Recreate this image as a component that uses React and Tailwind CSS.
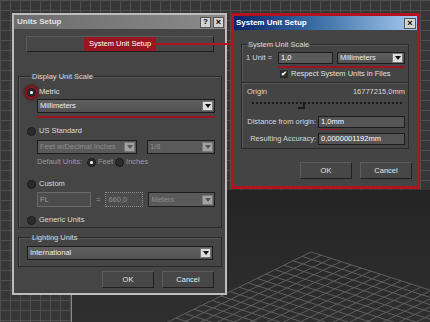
const lines = [];
const apex = [239, 62];
const a = [10, 3.2];
const b = [-9, 4.4];
const n = 26;
for (let i = 0; i <= n; i++) {
  lines.push([apex[0] + i * a[0], apex[1] + i * a[1], apex[0] + i * a[0] + n * b[0], apex[1] + i * a[1] + n * b[1]]);
  lines.push([apex[0] + i * b[0], apex[1] + i * b[1], apex[0] + i * b[0] + n * a[0], apex[1] + i * b[1] + n * a[1]]);
}

function Radio({ on, glow }) {
  return (
    <span
      className={`flex h-[9px] w-[9px] shrink-0 items-center justify-center rounded-full border border-[#1a1a1a] bg-[#2c2c2c] ${
        glow ? 'shadow-[0_0_0_2px_#8e1420,0_0_3px_3px_#5a1016]' : ''
      }`}
    >
      {on && <span className="h-[3px] w-[3px] rounded-full bg-white" />}
    </span>
  );
}

function Arrow({ off }) {
  return (
    <span
      className={`flex h-[10px] w-[11px] shrink-0 items-center justify-center border border-[#777] ${
        off ? 'bg-[#a3a3a3]' : 'bg-[#dcdcdc]'
      }`}
    >
      <span
        className={`h-0 w-0 border-l-[3px] border-r-[3px] border-t-[4px] border-l-transparent border-r-transparent ${
          off ? 'border-t-[#555]' : 'border-t-[#111]'
        }`}
      />
    </span>
  );
}

function Drop({ text, off, className = '' }) {
  return (
    <div
      className={`flex items-center justify-between border border-[#1c1c1c] pl-[2px] pr-[1px] ${
        off ? 'bg-[#5a5a5a] text-[#8c8c8c]' : 'bg-[linear-gradient(#5f5f5f,#525252)] text-[#ececec]'
      } ${className}`}
    >
      <span className="leading-none">{text}</span>
      <Arrow off={off} />
    </div>
  );
}

function Btn({ children, className = '' }) {
  return (
    <div
      className={`flex items-center justify-center border border-t-[#5c5c5c] border-l-[#5c5c5c] border-b-[#1f1f1f] border-r-[#1f1f1f] bg-[#474747] text-[#e4e4e4] ${className}`}
    >
      {children}
    </div>
  );
}

function UnitsSetup() {
  return (
    <div className="absolute left-[12px] top-[13px] flex h-[282px] w-[215px] flex-col border-2 border-[#bdbdbd] bg-[#454545]">
      <div className="flex h-[14px] items-center justify-between bg-[linear-gradient(to_right,#6c6c6c,#8a8a8a)] pl-[3px] pr-[1px]">
        <span className="text-[8px] font-bold text-[#e2e2e2]">Units Setup</span>
        <div className="flex gap-[2px]">
          <span className="flex h-[11px] w-[11px] items-center justify-center border border-[#555] bg-[#d4d4d4] text-[8px] font-bold leading-none text-black">?</span>
          <span className="flex h-[11px] w-[11px] items-center justify-center border border-[#555] bg-[#d4d4d4] text-[9px] font-bold leading-none text-black">×</span>
        </div>
      </div>

      <Btn className="ml-[12px] mr-[11px] mt-[7px] h-[16px]">
        <span className="bg-[#9a1524] px-[5px] py-[3px] leading-none text-white">System Unit Setup</span>
      </Btn>

      <fieldset className="ml-[4px] mr-[3px] mt-[20px] flex flex-col border border-[#2a2a2a] pb-[2px] pl-[8px] pr-[6px] shadow-[inset_1px_1px_0_#585858]">
        <legend className="ml-[4px] px-[1px] leading-[9px] text-[#d6d6d6]">Display Unit Scale</legend>
        <div className="mt-[6px] flex h-[10px] items-center gap-[3px]">
          <Radio on glow />
          <span className="text-[#e0e0e0]">Metric</span>
        </div>
        <Drop text="Millimeters" className="ml-[10px] mt-[2px] h-[14px]" />
        <div className="ml-[10px] mt-[3px] h-[2px] bg-[#a0121f]" />
        <div className="mt-[8px] flex h-[10px] items-center gap-[3px]">
          <Radio />
          <span className="text-[#dadada]">US Standard</span>
        </div>
        <div className="ml-[10px] mt-[4px] flex gap-[10px]">
          <Drop off text="Feet w/Decimal Inches" className="h-[14px] w-[100px]" />
          <Drop off text="1/8" className="h-[14px] flex-1" />
        </div>
        <div className="ml-[10px] mt-[3px] flex h-[10px] items-center text-[#9a9a9a]">
          <span>Default Units:</span>
          <span className="ml-[5px]"><Radio on /></span>
          <span className="ml-[2px]">Feet</span>
          <span className="ml-[2px]"><Radio /></span>
          <span className="ml-[2px]">Inches</span>
        </div>
        <div className="mt-[12px] flex h-[10px] items-center gap-[3px]">
          <Radio />
          <span className="text-[#dadada]">Custom</span>
        </div>
        <div className="ml-[10px] mt-[3px] flex h-[15px] items-center">
          <div className="flex h-full w-[54px] items-center border border-[#6a6a6a] bg-[#4c4c4c] pl-[2px] text-[#a0a0a0]">FL</div>
          <span className="mx-[5px] text-[#9a9a9a]">=</span>
          <div className="flex h-full w-[38px] items-center border border-dotted border-[#8a8a8a] bg-[#4c4c4c] pl-[2px] text-[#8c8c8c]">660,0</div>
          <Drop off text="Meters" className="ml-[5px] h-full flex-1" />
        </div>
        <div className="mt-[8px] flex h-[10px] items-center gap-[3px]">
          <Radio />
          <span className="text-[#dadada]">Generic Units</span>
        </div>
      </fieldset>

      <fieldset className="ml-[4px] mr-[3px] mt-[5px] flex flex-col border border-[#2a2a2a] pb-[6px] pl-[8px] pr-[8px] shadow-[inset_1px_1px_0_#585858]">
        <legend className="ml-[4px] px-[1px] leading-[9px] text-[#d6d6d6]">Lighting Units</legend>
        <Drop text="International" className="mt-[4px] h-[14px] bg-[linear-gradient(#4a4a4a,#3e3e3e)]" />
      </fieldset>

      <div className="mr-[11px] mt-[4px] flex justify-end gap-[8px]">
        <Btn className="h-[17px] w-[52px]">OK</Btn>
        <Btn className="h-[17px] w-[52px]">Cancel</Btn>
      </div>
    </div>
  );
}

function SystemUnitSetup() {
  return (
    <div className="absolute left-[231px] top-[13px] flex h-[176px] w-[189px] flex-col border-[3px] border-[#b3121f] bg-[#444444]">
      <div className="flex h-[14px] items-center justify-between bg-[linear-gradient(to_right,#0a246a,#3a6ea5_45%,#a6caf0)] pl-[2px] pr-[1px]">
        <span className="text-[8px] font-bold text-white">System Unit Setup</span>
        <span className="flex h-[11px] w-[12px] items-center justify-center border border-[#555] bg-[#d4d4d4] text-[9px] font-bold leading-none text-black">×</span>
      </div>

      <fieldset className="ml-[7px] mr-[8px] mt-[10px] flex flex-col border border-[#2a2a2a] pb-[3px] shadow-[inset_1px_1px_0_#585858]">
        <legend className="ml-[5px] px-[1px] leading-[9px] text-[#d6d6d6]">System Unit Scale</legend>
        <div className="ml-[4px] mr-[3px] mt-[3px] flex h-[12px] items-center">
          <span className="w-[32px] text-[#d8d8d8]">1 Unit =</span>
          <div className="flex h-full w-[55px] items-center border border-[#1c1c1c] bg-[#5a5a5a] pl-[2px] text-white">1,0</div>
          <Drop text="Millimeters" className="ml-[4px] h-full flex-1" />
        </div>
        <div className="ml-[36px] mr-[3px] mt-[2px] h-[2px] bg-[#a0121f]" />
        <div className="ml-[38px] mt-[1px] flex h-[9px] items-center gap-[3px]">
          <span className="flex h-[8px] w-[8px] items-center justify-center bg-[#2a2a2a] text-[7px] font-bold leading-none text-white">✔</span>
          <span className="text-[#e0e0e0]">Respect System Units in Files</span>
        </div>
        <div className="mt-[4px] h-px bg-[#2a2a2a] shadow-[0_1px_0_#585858]" />
        <div className="ml-[5px] mr-[3px] mt-[4px] flex h-[9px] items-center justify-between text-[#d8d8d8]">
          <span>Origin</span>
          <span>16777215,0mm</span>
        </div>
        <div className="relative ml-[10px] mr-[6px] mt-[2px] h-[12px]">
          <div className="absolute left-0 right-0 top-[4px] border-t-2 border-dotted border-[#1a1a1a]" />
          <div className="absolute left-[51px] top-[4px] h-[7px] w-[2px] bg-[#1a1a1a]" />
          <div className="absolute left-[46px] top-[9px] h-[2px] w-[6px] bg-[#1a1a1a]" />
        </div>
        <div className="mr-[3px] mt-[6px] flex h-[12px] items-center">
          <span className="w-[74px] text-right text-[#d8d8d8]">Distance from origin:</span>
          <div className="ml-[2px] flex h-full flex-1 items-center border border-[#1c1c1c] bg-[#555555] pl-[2px] text-white">1,0mm</div>
        </div>
        <div className="ml-[78px] mt-[1px] h-[1px] w-[22px] bg-[#a0121f]" />
        <div className="mr-[3px] mt-[3px] flex h-[12px] items-center">
          <span className="w-[74px] text-right text-[#d8d8d8]">Resulting Accuracy:</span>
          <div className="ml-[2px] flex h-full flex-1 items-center border border-[#1c1c1c] bg-[#555555] pl-[2px] text-white">0,0000001192mm</div>
        </div>
      </fieldset>

      <div className="mr-[5px] mt-[13px] flex justify-end gap-[8px]">
        <Btn className="h-[17px] w-[52px]">OK</Btn>
        <Btn className="h-[17px] w-[52px]">Cancel</Btn>
      </div>
    </div>
  );
}

export default function App() {
  return (
    <div className="relative h-[322px] w-[430px] overflow-hidden bg-[#363636] bg-[linear-gradient(to_right,#4e4e4e_1px,transparent_1px),linear-gradient(to_bottom,#4e4e4e_1px,transparent_1px)] bg-[size:10px_10px] font-['Liberation_Sans',Arial,sans-serif] text-[7.5px]">
      <div className="absolute bottom-0 left-[71px] right-0 top-[190px] border-l border-[#9c9040] bg-[linear-gradient(#242424,#2f2f2f)]">
        <svg width="359" height="132" className="block">
          {lines.map((l, i) => (
            <line key={i} x1={l[0]} y1={l[1]} x2={l[2]} y2={l[3]} stroke="#5e5e5e" strokeWidth="1" />
          ))}
        </svg>
      </div>
      <UnitsSetup />
      <SystemUnitSetup />
      <div className="absolute left-[153px] top-[43px] h-[2px] w-[79px] bg-[#b3121f]" />
    </div>
  );
}
